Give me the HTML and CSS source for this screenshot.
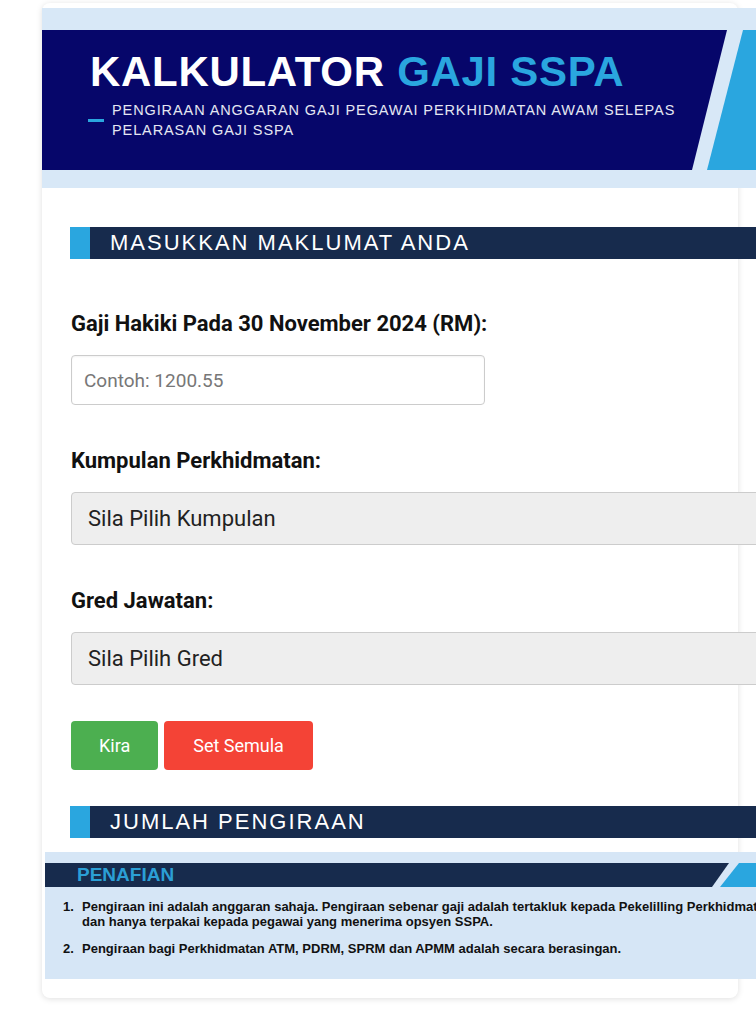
FILE: index.html
```html
<!DOCTYPE html>
<html lang="ms">
<head>
<meta charset="utf-8">
<title>Kalkulator Gaji SSPA</title>
<link rel="stylesheet" href="styles.css">
</head>
<body>
<div class="page">
  <div class="card">
    <header class="hero">
      <div class="hero-main">
        <h1 class="hero-title">KALKULATOR <span class="accent">GAJI SSPA</span></h1>
        <div class="hero-sub">
          <span class="dash"></span>
          <p>PENGIRAAN ANGGARAN GAJI PEGAWAI PERKHIDMATAN AWAM SELEPAS PELARASAN GAJI SSPA</p>
        </div>
      </div>
      <div class="hero-stripe"></div>
    </header>

    <section class="content">
      <h2 class="bar">MASUKKAN MAKLUMAT ANDA</h2>
      <form class="form">
        <div class="field field-first">
          <label class="label" for="gaji">Gaji Hakiki Pada 30 November 2024 (RM):</label>
          <input class="input" id="gaji" type="text" placeholder="Contoh: 1200.55">
        </div>
        <div class="field">
          <label class="label" for="kumpulan">Kumpulan Perkhidmatan:</label>
          <select class="select" id="kumpulan"><option>Sila Pilih Kumpulan</option></select>
        </div>
        <div class="field">
          <label class="label" for="gred">Gred Jawatan:</label>
          <select class="select" id="gred"><option>Sila Pilih Gred</option></select>
        </div>
        <div class="actions">
          <button type="button" class="btn btn-green">Kira</button>
          <button type="button" class="btn btn-red">Set Semula</button>
        </div>
      </form>
      <h2 class="bar bar-second">JUMLAH PENGIRAAN</h2>
    </section>

    <section class="disclaimer">
      <div class="disc-panel">
        <div class="disc-head">
          <h3 class="disc-title">PENAFIAN</h3>
          <div class="disc-stripe"></div>
        </div>
        <ol class="disc-list">
          <li><span class="num">1.</span><span class="txt">Pengiraan ini adalah anggaran sahaja. Pengiraan sebenar gaji adalah tertakluk kepada Pekelilling Perkhidmatan Awam<br>dan hanya terpakai kepada pegawai yang menerima opsyen SSPA.</span></li>
          <li><span class="num">2.</span><span class="txt">Pengiraan bagi Perkhidmatan ATM, PDRM, SPRM dan APMM adalah secara berasingan.</span></li>
        </ol>
      </div>
    </section>
  </div>
</div>
</body>
</html>
```

FILE: styles.css
```css
* { box-sizing: border-box; }

body {
  margin: 0;
  background: #ffffff;
  font-family: "Liberation Sans", Arial, sans-serif;
}

.page {
  width: 756px;
  height: 1024px;
  overflow: hidden;
  padding-top: 3px;
}

.card {
  margin-left: 42px;
  width: 696px;
  background: #ffffff;
  border-radius: 8px;
  box-shadow: 0 1px 6px rgba(0, 0, 0, 0.13);
  padding: 5px 0 5px 0;
}

/* Header */
.hero {
  position: relative;
  background: #d8e8f7;
  padding: 22px 0 18px;
  margin-right: -60px;
  overflow: hidden;
}

.hero-main {
  background: #06066a;
  height: 140px;
  padding: 21px 0 0 46px;
  clip-path: polygon(0 0, 685px 0, 650px 100%, 0 100%);
}

.hero-title {
  margin: 0 0 0 2px;
  font-size: 42px;
  line-height: 42px;
  font-weight: 700;
  letter-spacing: 0.7px;
  color: #ffffff;
}

.accent { color: #2aa6df; }

.hero-sub {
  display: flex;
  align-items: center;
  gap: 8px;
  margin-top: 7px;
}

.dash {
  flex: none;
  width: 16px;
  height: 3px;
  background: #2aa6df;
}

.hero-sub p {
  margin: 0;
  max-width: 590px;
  font-size: 14.5px;
  line-height: 20px;
  letter-spacing: 0.9px;
  color: #e4e6f2;
}

.hero-stripe {
  position: absolute;
  top: 22px;
  left: 665px;
  width: 140px;
  height: 140px;
  background: #2aa6df;
  clip-path: polygon(36px 0, 100% 0, 100% 100%, 0 100%);
}

/* Content */
.content {
  padding: 39px 0 0 28px;
  margin-right: -60px;
}

.bar {
  margin: 0;
  height: 32px;
  background: #172b4d;
  border-left: 20px solid #2aa6df;
  padding-left: 20px;
  color: #ffffff;
  font-size: 22px;
  line-height: 32px;
  font-weight: 400;
  letter-spacing: 2px;
  white-space: nowrap;
}

.bar-second { margin-top: 36px; }

.form {
  padding-left: 1px;
  font-family: Roboto, "Liberation Sans", sans-serif;
}

.field { margin-top: 44px; }
.field-first { margin-top: 53px; }

.label {
  display: block;
  font-size: 22px;
  line-height: 24px;
  font-weight: 700;
  color: #111111;
  margin-bottom: 19px;
}

.input {
  display: block;
  width: 414px;
  height: 50px;
  border: 1px solid #cccccc;
  border-radius: 4px;
  padding: 0 12px;
  font-family: Roboto, sans-serif;
  font-size: 19px;
  color: #222;
  background: #fff;
  box-shadow: inset 0 1px 2px rgba(0, 0, 0, 0.05);
}

.input::placeholder { color: #777777; }

.select {
  display: block;
  width: 100%;
  height: 53px;
  border: 1px solid #cccccc;
  border-radius: 4px;
  padding: 0 16px;
  background: #eeeeee;
  font-family: Roboto, sans-serif;
  font-size: 22px;
  color: #222222;
  appearance: none;
  -webkit-appearance: none;
}

.actions {
  display: flex;
  gap: 6px;
  margin-top: 36px;
}

.btn {
  height: 49px;
  padding: 0 28px;
  border: none;
  border-radius: 4px;
  font-family: Roboto, sans-serif;
  font-size: 18px;
  color: #ffffff;
}

.btn-green { background: #4caf50; }
.btn-red { background: #f44336; padding: 0 29px; }

/* Disclaimer */
.disclaimer {
  margin-top: 10px;
  padding: 4px 0 14px 3px;
}

.disc-panel {
  background: #d6e6f6;
  padding: 11px 0 23px;
  margin-right: -60px;
}

.disc-head {
  position: relative;
  height: 24px;
}

.disc-title {
  margin: 0;
  height: 24px;
  background: #172b4d;
  clip-path: polygon(0 0, 684px 0, 667px 100%, 0 100%);
  padding-left: 32px;
  font-size: 19px;
  line-height: 24px;
  font-weight: 700;
  color: #2b9fd6;
}

.disc-stripe {
  position: absolute;
  top: 0;
  left: 675px;
  width: 120px;
  height: 24px;
  background: #2aa6df;
  clip-path: polygon(19px 0, 100% 0, 100% 100%, 0 100%);
}

.disc-list {
  list-style: none;
  margin: 12px 0 0;
  padding: 0 0 0 18px;
  font-size: 13px;
  line-height: 15px;
  font-weight: 700;
  color: #111111;
}

.disc-list li {
  display: flex;
  white-space: nowrap;
}

.disc-list li + li { margin-top: 12px; }

.num {
  flex: none;
  width: 19px;
}
```
